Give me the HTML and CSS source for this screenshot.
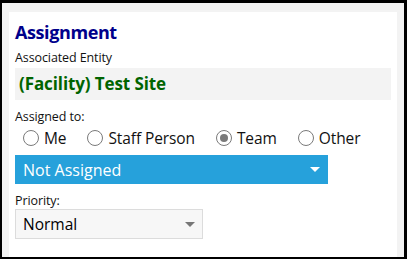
FILE: index.html
```html
<!DOCTYPE html>
<html>
<head>
<meta charset="utf-8">
<link rel="stylesheet" href="styles.css">
</head>
<body>
<div class="frame">
  <div class="card">
    <h2 class="title">Assignment</h2>
    <div class="label">Associated Entity</div>
    <div class="entity">(Facility) Test Site</div>
    <div class="label label-assigned">Assigned to:</div>
    <div class="radios">
      <label class="radio"><span class="dot"></span>Me</label>
      <label class="radio"><span class="dot"></span>Staff Person</label>
      <label class="radio"><span class="dot checked"></span>Team</label>
      <label class="radio"><span class="dot"></span>Other</label>
    </div>
    <div class="select-blue">
      <span>Not Assigned</span>
      <span class="caret caret-white"></span>
    </div>
    <div class="label label-priority">Priority:</div>
    <div class="select-gray">
      <span>Normal</span>
      <span class="caret caret-gray"></span>
    </div>
  </div>
</div>
</body>
</html>
```

FILE: styles.css
```css
* { box-sizing: border-box; }
html, body { margin: 0; padding: 0; }
body {
  width: 407px;
  height: 259px;
  font-family: "Open Sans", "Noto Sans", sans-serif;
  color: #111;
}
.frame {
  width: 407px;
  height: 259px;
  border-style: solid;
  border-color: #000;
  border-width: 3px 3px 2px 2px;
  background: #f3f3f3;
  padding: 9px 7px 0 7px;
  display: flex;
}
.card {
  flex: 1;
  background: #fff;
  padding: 8px 6px 0 6px;
  display: flex;
  flex-direction: column;
  align-items: flex-start;
}
.title {
  margin: 0;
  font-size: 18px;
  font-weight: 700;
  color: #00008b;
  line-height: 24px;
  letter-spacing: -0.4px;
}
.label {
  font-size: 12.5px;
  line-height: 16px;
  color: #111;
  margin-top: 6px;
  letter-spacing: -0.1px;
}
.entity {
  align-self: stretch;
  background: #f3f3f3;
  height: 32px;
  margin-top: 2px;
  padding: 0 4px;
  font-size: 17px;
  font-weight: 700;
  color: #006400;
  line-height: 32px;
  letter-spacing: -0.1px;
}
.label-assigned { margin-top: 9px; }
.radios {
  display: flex;
  gap: 21px;
  margin-top: 2px;
  padding-left: 8px;
  height: 22px;
  align-items: center;
}
.radio {
  display: flex;
  align-items: center;
  gap: 5px;
  font-size: 15.5px;
  line-height: 20px;
  letter-spacing: -0.1px;
}
.dot {
  width: 16px;
  height: 16px;
  border: 1px solid #7a7a7a;
  border-radius: 50%;
  background: #fff;
  display: flex;
  align-items: center;
  justify-content: center;
}
.dot.checked::after {
  content: "";
  width: 8px;
  height: 8px;
  border-radius: 50%;
  background: #7a7a7a;
}
.select-blue {
  width: 313px;
  height: 29px;
  margin-top: 6px;
  background: #26a1db;
  color: #fff;
  font-size: 16px;
  display: flex;
  align-items: center;
  justify-content: space-between;
  padding: 0 8px 0 8px;
}
.caret {
  width: 0;
  height: 0;
  border-left: 5px solid transparent;
  border-right: 5px solid transparent;
  border-top: 5px solid #fff;
}
.caret-gray { border-top-color: #777; }
.label-priority { margin-top: 9px; }
.select-gray {
  width: 188px;
  height: 30px;
  margin-top: 0;
  background: #f7f7f7;
  border: 1px solid #dcdcdc;
  font-size: 15.5px;
  display: flex;
  align-items: center;
  justify-content: space-between;
  padding: 0 7px 0 7px;
  color: #000;
}
```
